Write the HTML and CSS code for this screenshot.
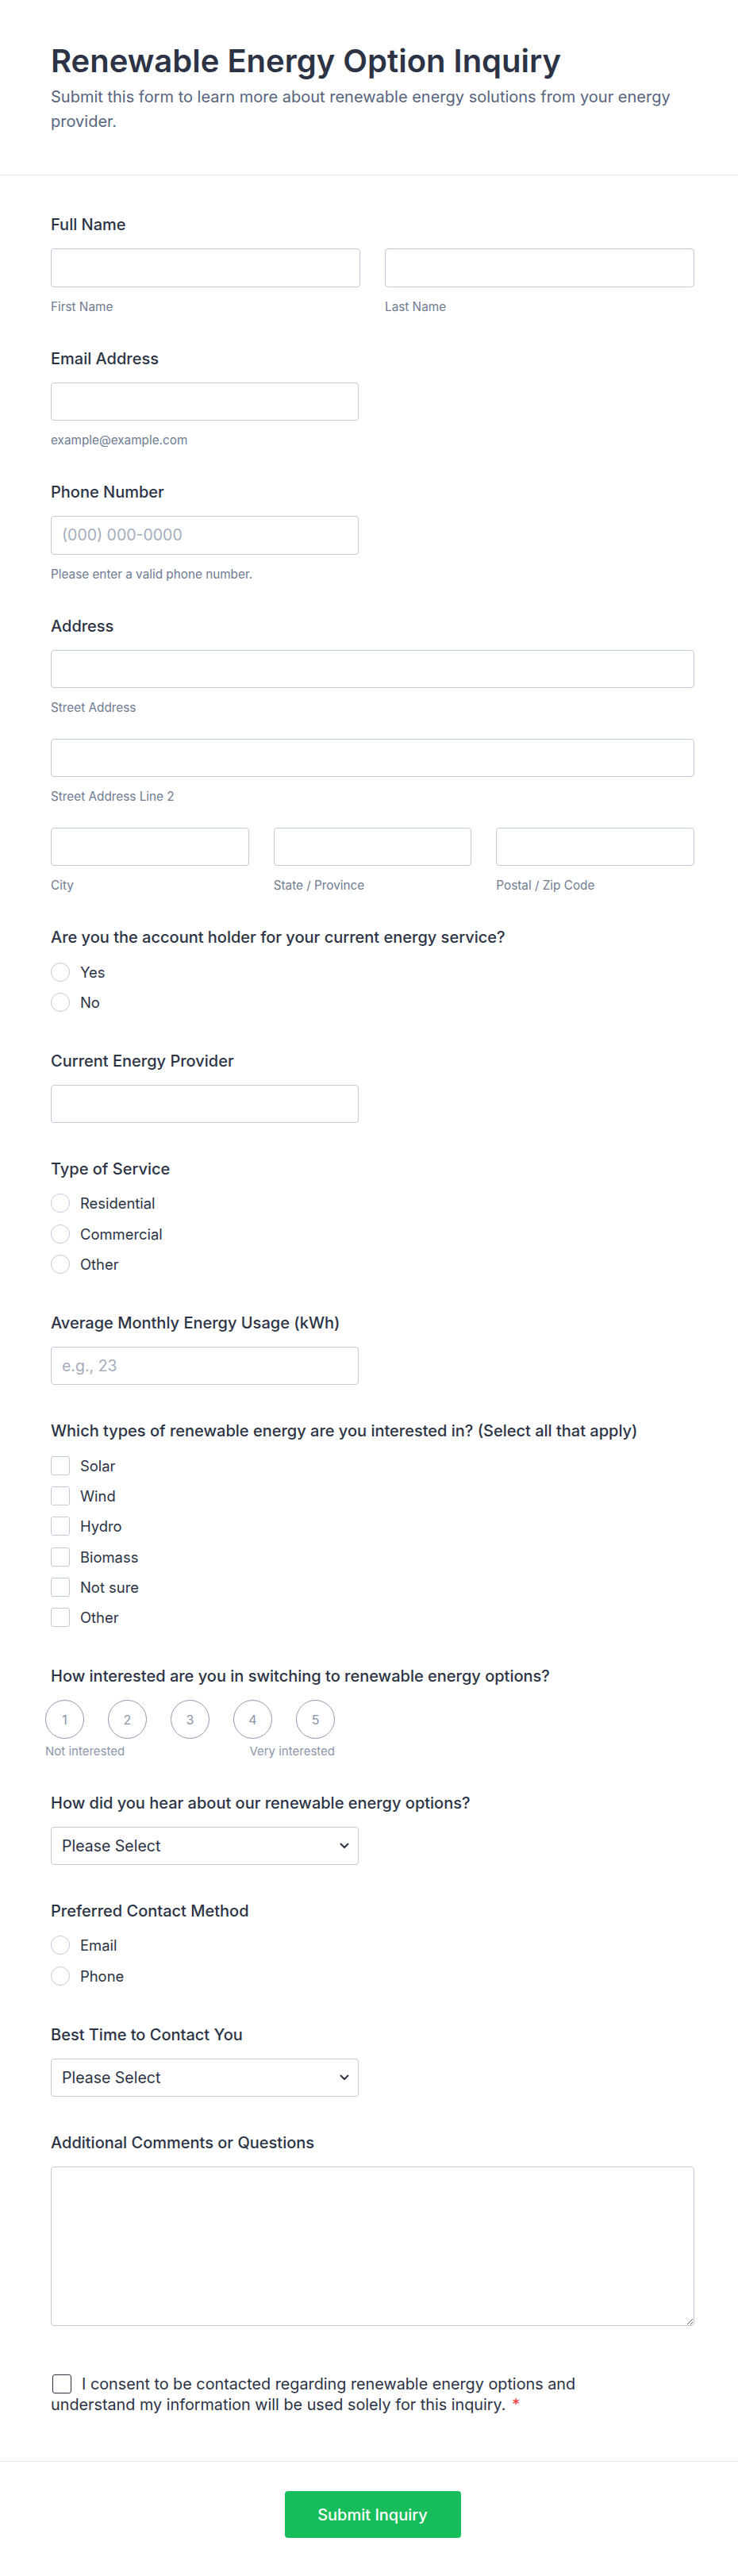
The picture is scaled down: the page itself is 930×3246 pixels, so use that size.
FILE: index.html
```html
<!DOCTYPE html>
<html lang="en">
<head>
<meta charset="utf-8">
<title>Renewable Energy Option Inquiry</title>
<link rel="stylesheet" href="styles.css">
</head>
<body>
<div class="page">
  <header class="header">
    <h1 class="title">Renewable Energy Option Inquiry</h1>
    <p class="subtitle">Submit this form to learn more about renewable energy solutions from your energy provider.</p>
  </header>

  <form class="form">
    <div class="field">
      <div class="label">Full Name</div>
      <div class="cols-2">
        <div><input class="input" type="text"><div class="sub">First Name</div></div>
        <div><input class="input" type="text"><div class="sub">Last Name</div></div>
      </div>
    </div>

    <div class="field">
      <div class="label">Email Address</div>
      <input class="input w-half" type="email">
      <div class="sub">example@example.com</div>
    </div>

    <div class="field">
      <div class="label">Phone Number</div>
      <input class="input w-half" type="tel" placeholder="(000) 000-0000">
      <div class="sub">Please enter a valid phone number.</div>
    </div>

    <div class="field">
      <div class="label">Address</div>
      <input class="input" type="text">
      <div class="sub sub-gap">Street Address</div>
      <input class="input" type="text">
      <div class="sub sub-gap">Street Address Line 2</div>
      <div class="cols-3">
        <div><input class="input" type="text"><div class="sub">City</div></div>
        <div><input class="input" type="text"><div class="sub">State / Province</div></div>
        <div><input class="input" type="text"><div class="sub">Postal / Zip Code</div></div>
      </div>
    </div>

    <div class="field">
      <div class="label">Are you the account holder for your current energy service?</div>
      <div class="options">
        <label class="option"><input class="radio" type="radio" name="holder">Yes</label>
        <label class="option"><input class="radio" type="radio" name="holder">No</label>
      </div>
    </div>

    <div class="field field-input">
      <div class="label">Current Energy Provider</div>
      <input class="input w-half" type="text">
    </div>

    <div class="field">
      <div class="label">Type of Service</div>
      <div class="options">
        <label class="option"><input class="radio" type="radio" name="service">Residential</label>
        <label class="option"><input class="radio" type="radio" name="service">Commercial</label>
        <label class="option"><input class="radio" type="radio" name="service">Other</label>
      </div>
    </div>

    <div class="field field-input">
      <div class="label">Average Monthly Energy Usage (kWh)</div>
      <input class="input w-half" type="text" placeholder="e.g., 23">
    </div>

    <div class="field">
      <div class="label">Which types of renewable energy are you interested in? (Select all that apply)</div>
      <div class="options options-check">
        <label class="option"><input class="check" type="checkbox">Solar</label>
        <label class="option"><input class="check" type="checkbox">Wind</label>
        <label class="option"><input class="check" type="checkbox">Hydro</label>
        <label class="option"><input class="check" type="checkbox">Biomass</label>
        <label class="option"><input class="check" type="checkbox">Not sure</label>
        <label class="option"><input class="check" type="checkbox">Other</label>
      </div>
    </div>

    <div class="field">
      <div class="label">How interested are you in switching to renewable energy options?</div>
      <div class="rating">
        <div class="scale">
          <span class="circle">1</span>
          <span class="circle">2</span>
          <span class="circle">3</span>
          <span class="circle">4</span>
          <span class="circle">5</span>
        </div>
        <div class="scale-labels"><span>Not interested</span><span>Very interested</span></div>
      </div>
    </div>

    <div class="field field-input">
      <div class="label">How did you hear about our renewable energy options?</div>
      <div class="select-wrap w-half">
        <select class="select"><option>Please Select</option></select>
        <svg class="chevron" width="12" height="8" viewBox="0 0 12 8" aria-hidden="true"><path d="M1.5 1.5 L6 6 L10.5 1.5" fill="none" stroke="#2c3345" stroke-width="2" stroke-linecap="round" stroke-linejoin="round"/></svg>
      </div>
    </div>

    <div class="field">
      <div class="label">Preferred Contact Method</div>
      <div class="options">
        <label class="option"><input class="radio" type="radio" name="contact">Email</label>
        <label class="option"><input class="radio" type="radio" name="contact">Phone</label>
      </div>
    </div>

    <div class="field field-input">
      <div class="label">Best Time to Contact You</div>
      <div class="select-wrap w-half">
        <select class="select"><option>Please Select</option></select>
        <svg class="chevron" width="12" height="8" viewBox="0 0 12 8" aria-hidden="true"><path d="M1.5 1.5 L6 6 L10.5 1.5" fill="none" stroke="#2c3345" stroke-width="2" stroke-linecap="round" stroke-linejoin="round"/></svg>
      </div>
    </div>

    <div class="field">
      <div class="label">Additional Comments or Questions</div>
      <textarea class="textarea"></textarea>
    </div>

    <div class="consent">
      <label><input class="consent-box" type="checkbox">I consent to be contacted regarding renewable energy options and understand my information will be used solely for this inquiry. <span class="req">*</span></label>
    </div>
  </form>

  <footer class="footer">
    <button class="btn" type="button">Submit Inquiry</button>
  </footer>
</div>
</body>
</html>
```

FILE: styles.css
```css
* {
  box-sizing: border-box;
}

html,
body {
  margin: 0;
  padding: 0;
  background: #ffffff;
}

body {
  font-family: Inter, "Noto Sans", "Liberation Sans", sans-serif;
  color: #2c3345;
}

.header {
  padding: 53px 55px 51px 64px;
  border-bottom: 1px solid #e3e6ee;
}

.title {
  margin: 0;
  font-size: 40px;
  line-height: 48px;
  font-weight: 600;
  color: #2c3345;
}

.subtitle {
  margin: 6px 0 0;
  font-size: 20px;
  line-height: 31px;
  color: #57647e;
}

.form {
  padding: 49px 55px 57px 64px;
}

.field {
  margin-bottom: 43px;
}

.field-input {
  margin-bottom: 44.5px;
}

.label {
  font-size: 20px;
  line-height: 27px;
  font-weight: 500;
  color: #2c3345;
  margin-bottom: 16px;
}

.input {
  display: block;
  width: 100%;
  height: 48.5px;
  margin: 0;
  padding: 0 13px;
  border: 1px solid #c3cad8;
  border-radius: 4px;
  background: #ffffff;
  font-family: inherit;
  font-size: 19.5px;
  color: #2c3345;
  outline: none;
}

.input::placeholder {
  color: #a5adbd;
}

.w-half {
  width: 388px;
}

.cols-2 {
  display: grid;
  grid-template-columns: 1fr 1fr;
  column-gap: 31px;
}

.cols-3 {
  display: grid;
  grid-template-columns: 1fr 1fr 1fr;
  column-gap: 31px;
}

.sub {
  margin-top: 16px;
  font-size: 15.3px;
  line-height: 18px;
  color: #6f7b91;
}

.sub-gap {
  margin-bottom: 29.5px;
}

.options {
  display: flex;
  flex-direction: column;
  gap: 14.3px;
  padding-top: 1.5px;
  padding-bottom: 6px;
}

.options-check {
  padding-top: 2px;
}

.option {
  display: flex;
  align-items: center;
  height: 24px;
  font-size: 18.4px;
  color: #2c3345;
}

.radio,
.check {
  appearance: none;
  -webkit-appearance: none;
  flex: none;
  width: 24px;
  height: 24px;
  margin: 0 13px 0 0;
  border: 1px solid #c3cad8;
  background: #ffffff;
}

.radio {
  border-radius: 50%;
}

.check {
  border-radius: 3px;
}

.rating {
  width: 365px;
  margin-left: -7px;
}

.scale {
  display: flex;
  gap: 30px;
}

.circle {
  display: flex;
  align-items: center;
  justify-content: center;
  width: 49px;
  height: 49px;
  border: 1px solid #8f99ae;
  border-radius: 50%;
  font-size: 16px;
  color: #8a94a8;
}

.scale-labels {
  display: flex;
  justify-content: space-between;
  margin-top: 6.5px;
  font-size: 15px;
  line-height: 18px;
  color: #8d96aa;
}

.select-wrap {
  position: relative;
}

.select {
  appearance: none;
  -webkit-appearance: none;
  display: block;
  width: 100%;
  height: 48.5px;
  margin: 0;
  padding: 0 36px 0 13px;
  border: 1px solid #c3cad8;
  border-radius: 4px;
  background: #ffffff;
  font-family: inherit;
  font-size: 19.5px;
  color: #2c3345;
  outline: none;
}

.chevron {
  position: absolute;
  right: 12px;
  top: 50%;
  transform: translateY(-50%);
  pointer-events: none;
}

.textarea {
  display: block;
  width: 100%;
  height: 201px;
  margin: 0;
  padding: 10px 13px;
  border: 1px solid #c3cad8;
  border-radius: 4px;
  background: #ffffff;
  font-family: inherit;
  font-size: 18px;
  resize: vertical;
  outline: none;
}

.consent {
  max-width: 700px;
  padding-top: 17px;
  font-size: 19.8px;
  line-height: 26.7px;
  color: #2c3345;
}

.consent-box {
  appearance: none;
  -webkit-appearance: none;
  display: inline-block;
  vertical-align: top;
  width: 24px;
  height: 24px;
  margin: 1.5px 13px 0 2px;
  border: 1.5px solid #2c3345;
  border-radius: 3px;
  background: #ffffff;
}

.req {
  color: #f23a3c;
  margin-left: 2px;
}

.footer {
  display: flex;
  justify-content: center;
  padding: 37px 55px 50px 64px;
  border-top: 1px solid #e3e6ee;
}

.btn {
  width: 222px;
  height: 59px;
  border: none;
  border-radius: 4px;
  background: #18bd5b;
  color: #ffffff;
  font-family: inherit;
  font-size: 20px;
  font-weight: 500;
  cursor: pointer;
}
```
